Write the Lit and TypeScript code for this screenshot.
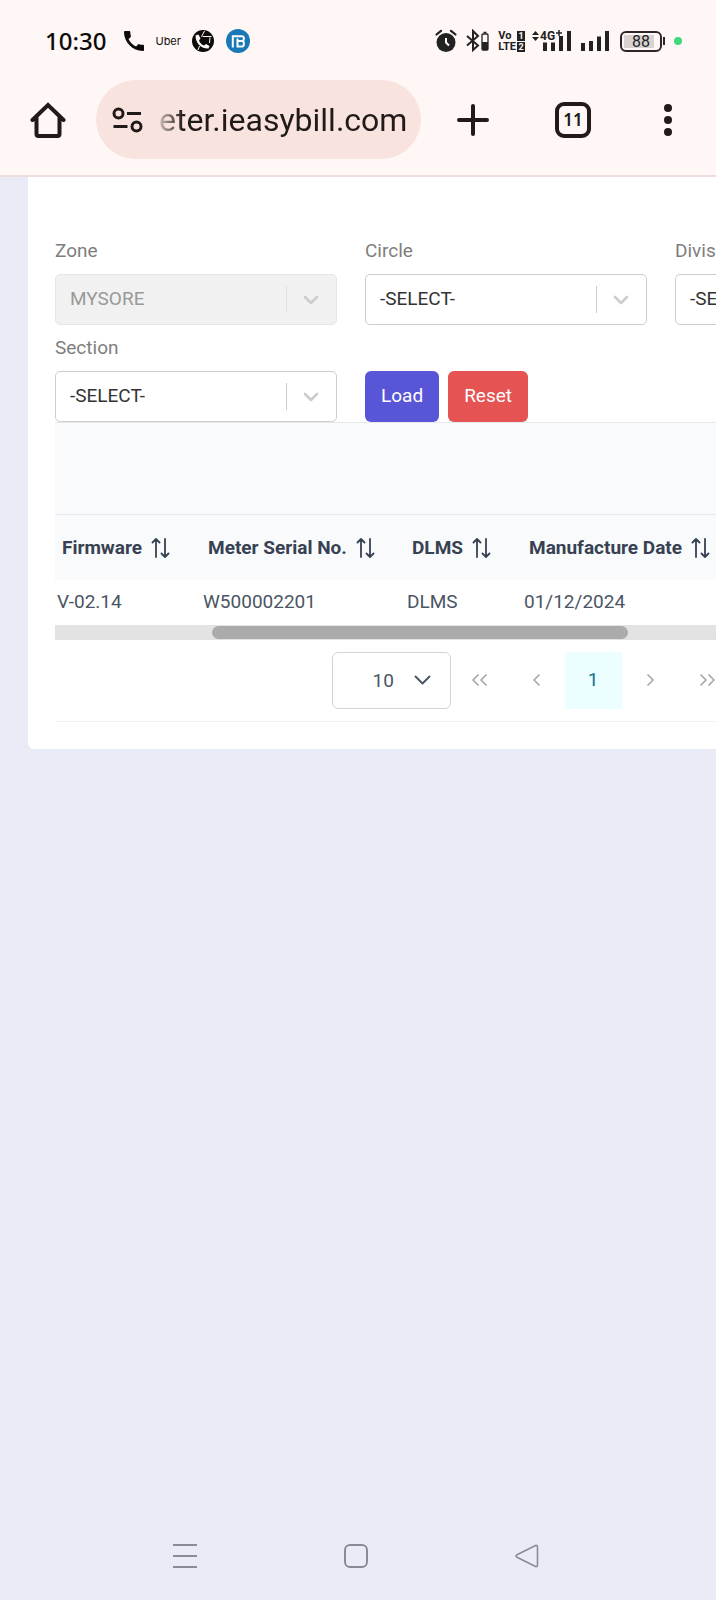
import { LitElement, html, css, svg } from "lit";
import { customElement, property } from "lit/decorators.js";

const chevron = svg`<path d="M2 2 L8 8 L14 2" fill="none" stroke="currentColor" stroke-width="2.6" stroke-linecap="round" stroke-linejoin="round"/>`;

/* Phone status bar: clock and notifications on the left, radios and battery on the right. */
@customElement("status-bar")
class StatusBar extends LitElement {
  static styles = css`
    :host {
      display: flex;
      align-items: center;
      justify-content: space-between;
      height: 82px;
      padding: 0 34px 0 45px;
      box-sizing: border-box;
      color: #0c0a0a;
      font-family: "Noto Sans", sans-serif;
    }
    svg { display: block; flex: none; }
    .side { display: flex; align-items: center; }
    .clock { font-size: 24px; line-height: 28px; font-weight: 500; margin-right: 18px; }
    .uber { font: 11px/16px Inter, sans-serif; margin: 0 11px; }
    .left svg + svg { margin-left: 12px; }
    .volte {
      display: grid;
      grid-template-columns: auto 8px;
      column-gap: 1px;
      font: 700 11px/11px Roboto, sans-serif;
      color: #222;
      margin: 0 7px 0 9px;
    }
    .sim { background: #222; color: #fff7f5; font-size: 9px; line-height: 10px; height: 10px; text-align: center; align-self: center; }
    .battery {
      display: flex;
      width: 42px;
      height: 21px;
      box-sizing: border-box;
      border: 2px solid #2b2727;
      border-radius: 6px;
      padding: 2px;
      margin-left: 10px;
    }
    .charge {
      width: 34px;
      background: linear-gradient(90deg, #d8d2d1 88%, #fff7f5 88%);
      font: 400 16px/13px Roboto, sans-serif;
      text-align: center;
      color: #222;
    }
    .cap { width: 2px; height: 8px; background: #2b2727; margin: 0 9px 0 1px; }
    .dot { width: 8px; height: 8px; border-radius: 50%; background: #3fda7d; }
  `;
  render() {
    return html`
      <div class="side left">
        <span class="clock">10:30</span>
        <svg width="20" height="20" viewBox="3 3 18 18" aria-hidden="true"><path fill="#0c0a0a" d="M20.01 15.38c-1.23 0-2.42-.2-3.53-.56a.977.977 0 0 0-1.01.24l-1.57 1.97c-2.83-1.35-5.48-3.9-6.89-6.83l1.95-1.66c.27-.28.35-.67.24-1.02-.37-1.11-.56-2.3-.56-3.53 0-.54-.45-.99-.99-.99H4.19C3.65 3 3 3.24 3 3.99 3 13.28 10.73 21 20.01 21c.71 0 .99-.63.99-1.18v-3.45c0-.54-.45-.99-.99-.99z"/></svg>
        <span class="uber">Uber</span>
        <svg width="22" height="22" viewBox="0 0 22 22" aria-hidden="true">
          <circle cx="11" cy="11" r="11" fill="#0c0a0a"/>
          <path d="M3.500 5.500 L6.500 4.500 L8.500 8.500 L7 10.500 C8 13 9.500 14.500 12 15.500 L14 14 L17.500 16 L16.500 18.500 C9 19 3.500 13 3.500 5.500z" fill="#fff7f5"/>
          <path d="M9.500 6.500 L12.500 1 M10.500 6.500 H19.500 M18 7.500 L17.500 13 M7.500 16 L6 20" stroke="#fff7f5" stroke-width="1" fill="none"/>
        </svg>
        <svg width="24" height="24" viewBox="0 0 24 24" aria-hidden="true">
          <circle cx="12" cy="12" r="12" fill="#1878b8"/>
          <path d="M6.800 18.500 V7.200 H16 a1.800 1.800 0 0 1 1.800 1.800 V10.200 a1.800 1.800 0 0 1 -1.800 1.800 H12.500 M16 12 a1.800 1.800 0 0 1 1.800 1.800 V15.700 a1.800 1.800 0 0 1 -1.800 1.800 H11.500 V9.500" stroke="#fff" stroke-width="2" fill="none"/>
        </svg>
      </div>
      <div class="side">
        <svg width="22" height="24" viewBox="0 0 22 24" aria-hidden="true">
          <circle cx="11" cy="13.500" r="9.500" fill="#222"/>
          <path d="M1.500 5.500 L6 1.800 M20.500 5.500 L16 1.800" stroke="#222" stroke-width="2.200" stroke-linecap="round"/>
          <path d="M11 9 V13.500 L14 16.500" stroke="#fff7f5" stroke-width="2" fill="none"/>
        </svg>
        <svg width="32" height="24" viewBox="-9 0 32 24" aria-hidden="true">
          <path d="M1 7 L12 16.500 L7 21 V2 L12 7 L1 16.500" fill="none" stroke="#222" stroke-width="2"/>
          <rect x="16" y="5" width="6" height="16" rx="1" fill="none" stroke="#222" stroke-width="1.300"/>
          <path d="M17.500 3.500 H20.500" stroke="#222" stroke-width="1.500"/>
          <rect x="16" y="13" width="6" height="8" fill="#222"/>
        </svg>
        <div class="volte">
          <span>Vo</span><span class="sim">1</span>
          <span>LTE</span><span class="sim">2</span>
        </div>
        <svg width="40" height="24" viewBox="0 0 40 24" aria-hidden="true">
          <path d="M0 6 L3.500 2 L7 6z M0 8 L3.500 12 L7 8z" fill="#222"/>
          <path d="M13 13.500 V22 M21 13.500 V22 M29 7 V22 M37 2 V22" stroke="#222" stroke-width="4"/>
          <text x="8" y="11" font-family="Roboto" font-weight="700" font-size="12" fill="#222">4G</text>
          <path d="M24 4 H30 M27 1 V7" stroke="#222" stroke-width="1.500"/>
        </svg>
        <svg width="38" height="24" viewBox="-9 0 38 24" aria-hidden="true">
          <path d="M2 14 V22 M10 12 V22 M18 7.500 V22 M26 2 V22" stroke="#222" stroke-width="4"/>
        </svg>
        <div class="battery"><div class="charge">88</div></div>
        <div class="cap"></div>
        <div class="dot"></div>
      </div>
    `;
  }
}

/* Browser toolbar with the address pill. */
@customElement("browser-bar")
class BrowserBar extends LitElement {
  static styles = css`
    :host {
      display: flex;
      align-items: center;
      height: 93px;
      padding: 0 44px 18px 30px;
      box-sizing: border-box;
    }
    button { border: 0; padding: 0; background: none; color: #201a19; display: block; flex: none; }
    svg { display: block; flex: none; }
    .address {
      flex: 1;
      min-width: 0;
      height: 79px;
      border-radius: 40px;
      background: #f9e3df;
      display: flex;
      align-items: center;
      gap: 16px;
      margin: 0 36px 0 30px;
      padding: 0 14px 0 16px;
      box-sizing: border-box;
    }
    input {
      flex: 1;
      min-width: 0;
      width: 0;
      height: 44px;
      padding: 0;
      border: 0;
      background: none;
      outline: 0;
      color: #201a19;
      font: 32px/44px Roboto, sans-serif;
      mask-image: linear-gradient(90deg, rgba(0, 0, 0, 0.2), #000 24px);
    }
    .add { margin-right: 66px; }
    .tabs {
      width: 36px;
      height: 36px;
      border: 4px solid #201a19;
      border-radius: 9px;
      font: 600 17px/28px "Noto Sans", sans-serif;
      text-align: center;
      margin-right: 73px;
    }
  `;
  render() {
    return html`
      <button aria-label="Home">
        <svg width="36" height="38" viewBox="0 0 36 38"><path d="M2.500 19 L18 4 L33.500 19 M6.500 16 V33 a2 2 0 0 0 2 2 H27.500 a2 2 0 0 0 2 -2 V16" fill="none" stroke="currentColor" stroke-width="4" stroke-linecap="round"/></svg>
      </button>
      <div class="address">
        <svg width="31" height="26" viewBox="0 0 31 26" aria-hidden="true">
          <g fill="none" stroke="#201a19" stroke-width="3"><circle cx="6.500" cy="6.500" r="4.500"/><circle cx="24.500" cy="19.500" r="4.500"/><path d="M15 6.500 H29 M1.500 19.500 H15.500"/></g>
        </svg>
        <input type="text" aria-label="Address" value="eter.ieasybill.com" />
      </div>
      <button class="add" aria-label="New tab">
        <svg width="32" height="32" viewBox="0 0 32 32"><path d="M16 2 V30 M2 16 H30" stroke="currentColor" stroke-width="4" stroke-linecap="round"/></svg>
      </button>
      <button class="tabs" aria-label="Open tabs">11</button>
      <button aria-label="Menu">
        <svg width="8" height="34" viewBox="0 0 8 34"><g fill="currentColor"><circle cx="4" cy="5" r="4"/><circle cx="4" cy="17" r="4"/><circle cx="4" cy="29" r="4"/></g></svg>
      </button>
    `;
  }
}

/* Labelled drop-down used by the filter form. */
@customElement("filter-select")
class FilterSelect extends LitElement {
  static styles = css`
    :host { display: block; }
    label { display: block; font-size: 19px; line-height: 24px; color: #7e7e7e; margin-bottom: 11px; }
    .box { display: grid; align-items: center; }
    .box > * { grid-area: 1 / 1; }
    select {
      appearance: none;
      width: 100%;
      height: 51px;
      padding: 0 70px 2px 14px;
      border: 1px solid #ccc;
      border-radius: 5px;
      background: #fff;
      color: #333;
      font: 19px/24px Roboto, sans-serif;
    }
    select:disabled { background: #f1f1f1; border-color: #e6e6e6; color: #999; opacity: 1; }
    .mark {
      justify-self: end;
      display: flex;
      align-items: center;
      gap: 16px;
      padding-right: 18px;
      color: #ccc;
      pointer-events: none;
    }
    .mark::before { content: ""; width: 1px; height: 27px; background: #ccc; }
    .off::before { background: #e2e2e2; }
  `;
  @property() label = "";
  @property() value = "";
  @property({ type: Boolean }) disabled = false;
  render() {
    return html`
      <label for="field">${this.label}</label>
      <div class="box">
        <select id="field" ?disabled=${this.disabled}><option>${this.value}</option></select>
        <span class="mark ${this.disabled ? "off" : ""}"><svg width="16" height="10" viewBox="0 0 16 10" aria-hidden="true">${chevron}</svg></span>
      </div>
    `;
  }
}

@customElement("meter-table")
class MeterTable extends LitElement {
  static styles = css`
    :host { display: block; }
    table { width: 100%; table-layout: fixed; border-collapse: collapse; }
    .c1 { width: 146px; }
    .c2 { width: 204px; }
    .c3 { width: 117px; }
    th { background: #f8fafc; border-top: 1px solid #e6e9ee; text-align: left; padding: 0 0 0 7px; height: 65px; color: #374151; font-size: 19px; line-height: 24px; font-weight: 700; box-sizing: border-box; white-space: nowrap; }
    .caption { height: 92px; }
    .head { display: flex; align-items: center; gap: 9px; padding-top: 2px; }
    .head svg { flex: none; }
    td { padding: 0 0 0 2px; height: 45px; color: #4b5563; font-size: 19px; line-height: 24px; box-sizing: border-box; }
    .track { height: 15px; background: #e3e3e3; padding: 1px 0; box-sizing: border-box; }
    .thumb { height: 13px; border-radius: 7px; background: #ababab; }
    .pager { display: flex; justify-content: center; padding: 12px 0; border-bottom: 1px solid #f1f2f5; }
    .size { display: grid; align-items: center; }
    .size > * { grid-area: 1 / 1; }
    select { appearance: none; width: 119px; height: 57px; border: 1px solid #d1d5db; border-radius: 6px; background: #fff; color: #4b5563; font: 19px/24px Roboto, sans-serif; padding: 2px 0 0 40px; }
    .size svg { justify-self: end; margin-right: 20px; color: #4b5563; pointer-events: none; }
    button { width: 57px; height: 57px; border: 0; padding: 0; background: none; color: #a3a8b0; font: 19px/24px Roboto, sans-serif; display: grid; place-items: center; }
    .current { background: #ecfeff; color: #0e7490; }
  `;
  private columns = ["Firmware", "Meter Serial No.", "DLMS", "Manufacture Date"];
  private rows = [["V-02.14", "W500002201", "DLMS", "01/12/2024"]];
  private thumb = { start: 157 / 957, size: 416 / 957 };

  private arrow(label: string, d: string, width: number) {
    return html`<button aria-label=${label}>
      <svg width=${width} height="12" viewBox="0 0 ${width} 12"><path d=${d} fill="none" stroke="currentColor" stroke-width="1.7" stroke-linecap="round" stroke-linejoin="round"/></svg>
    </button>`;
  }

  render() {
    return html`
      <table>
        <colgroup><col class="c1" /><col class="c2" /><col class="c3" /><col /></colgroup>
        <thead>
          <tr><th class="caption" colspan="4"></th></tr>
          <tr>
            ${this.columns.map(
              (c) => html`<th scope="col"><div class="head">${c}
                <svg width="19" height="20" viewBox="0 0 19 20" aria-hidden="true"><path d="M5 19 V1.500 M1.500 4.500 L5 1 L8.500 4.500 M14 1 V18.500 M10.500 15.500 L14 19 L17.500 15.500" fill="none" stroke="#374151" stroke-width="1.800" stroke-linecap="round" stroke-linejoin="round"/></svg>
              </div></th>`,
            )}
          </tr>
        </thead>
        <tbody>${this.rows.map((r) => html`<tr>${r.map((v) => html`<td>${v}</td>`)}</tr>`)}</tbody>
      </table>
      <div class="track"><div class="thumb" style="width:${this.thumb.size * 100}%;margin-left:${this.thumb.start * 100}%"></div></div>
      <div class="pager">
        <div class="size">
          <select aria-label="Rows per page"><option>10</option></select>
          <svg width="17" height="10" viewBox="0 0 16 10" aria-hidden="true"><path d="M1 1.500 L8 8.500 L15 1.500" fill="none" stroke="currentColor" stroke-width="1.900" stroke-linecap="round" stroke-linejoin="round"/></svg>
        </div>
        ${this.arrow("First page", "M6 1 L1 6 L6 11 M14 1 L9 6 L14 11", 15)}
        ${this.arrow("Previous page", "M6 1 L1 6 L6 11", 7)}
        <button class="current" aria-current="page">1</button>
        ${this.arrow("Next page", "M1 1 L6 6 L1 11", 7)}
        ${this.arrow("Last page", "M1 1 L6 6 L1 11 M9 1 L14 6 L9 11", 15)}
      </div>
    `;
  }
}

@customElement("app-root")
class AppRoot extends LitElement {
  static styles = css`
    :host {
      display: flex;
      flex-direction: column;
      min-height: 100vh;
      background: #e9ebf7;
      font-family: Roboto, sans-serif;
      overflow: hidden;
    }
    header { background: #fff7f5; border-bottom: 2px solid #efdddc; }
    main { flex: 1; padding-left: 28px; overflow: hidden; }
    .card { min-width: 1011px; box-sizing: border-box; background: #fff; border-radius: 0 0 6px 6px; padding: 62px 27px 27px; }
    form { display: grid; grid-template-columns: repeat(3, 282px); gap: 11px 28px; align-items: end; }
    .actions { display: flex; gap: 9px; }
    .actions button { height: 51px; border: 0; border-radius: 6px; padding: 0 16px 2px; color: #fff; font: 19px/24px Roboto, sans-serif; }
    .load { background: #5856d6; }
    .reset { background: #e55353; }
    nav { display: flex; justify-content: center; gap: 147px; padding: 0 4px 32px 0; }
    nav button { border: 0; padding: 0; background: none; color: #8a8b96; }
    nav svg { display: block; }
  `;
  render() {
    return html`
      <header><status-bar></status-bar><browser-bar></browser-bar></header>
      <main>
        <div class="card">
          <form>
            <filter-select label="Zone" value="MYSORE" disabled></filter-select>
            <filter-select label="Circle" value="-SELECT-"></filter-select>
            <filter-select label="Division" value="-SELECT-"></filter-select>
            <filter-select label="Section" value="-SELECT-"></filter-select>
            <div class="actions">
              <button class="load" type="button">Load</button>
              <button class="reset" type="button">Reset</button>
            </div>
          </form>
          <meter-table></meter-table>
        </div>
      </main>
      <nav aria-label="System">
        <button aria-label="Recent apps"><svg width="24" height="24" viewBox="0 0 24 24"><path d="M0 1 H24 M0 12 H24 M0 23 H24" stroke="currentColor" stroke-width="2"/></svg></button>
        <button aria-label="Home screen"><svg width="24" height="24" viewBox="0 0 24 24"><rect x="1" y="1" width="22" height="22" rx="5" fill="none" stroke="currentColor" stroke-width="2"/></svg></button>
        <button aria-label="Back"><svg width="24" height="24" viewBox="0 0 24 24"><path d="M2 10.800 L20.500 1.500 Q22.500 1 22.500 3 V21 Q22.500 23 20.500 22.500 L2 13.200 Q0 12 2 10.800z" fill="none" stroke="currentColor" stroke-width="1.600"/></svg></button>
      </nav>
    `;
  }
}
